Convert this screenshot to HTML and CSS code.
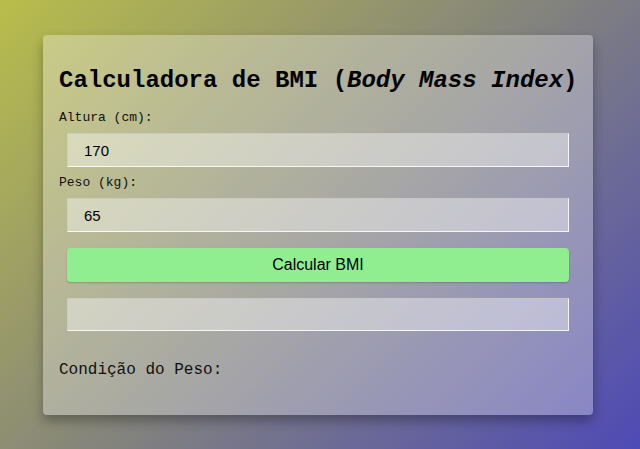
FILE: index.html
```html
<!DOCTYPE html>
<html lang="pt">
<head>
<meta charset="utf-8">
<title>Calculadora de BMI</title>
<link rel="stylesheet" href="styles.css">
</head>
<body>
<div class="card">
  <h1 class="title">Calculadora de BMI (<em>Body Mass Index</em>)</h1>
  <label class="label" for="altura">Altura (cm):</label>
  <input class="field" id="altura" type="text" value="170">
  <label class="label" for="peso">Peso (kg):</label>
  <input class="field" id="peso" type="text" value="65">
  <button class="btn" type="button">Calcular BMI</button>
  <input class="field result" type="text" value="">
  <p class="cond">Condição do Peso:</p>
</div>
</body>
</html>
```
FILE: styles.css
```css
html, body {
  margin: 0;
  height: 100%;
}
body {
  background: linear-gradient(135deg, #b9bd4a 0%, #84847c 50%, #4e4ab6 100%);
  padding: 35px 0 0 43px;
  box-sizing: border-box;
  font-family: "Liberation Mono", "Courier New", monospace;
}
.card {
  width: 550px;
  height: 380px;
  box-sizing: border-box;
  padding: 16px 16px 0 16px;
  background: rgba(255, 255, 255, 0.3);
  border-radius: 4px;
  box-shadow: 0 6px 12px rgba(0, 0, 0, 0.3);
  display: flex;
  flex-direction: column;
  align-items: stretch;
}
.title {
  font-family: "Liberation Mono", "Courier New", monospace;
  font-size: 24px;
  font-weight: bold;
  line-height: 27px;
  margin: 16px 0 16px 0;
  color: #000;
  white-space: nowrap;
}
.title em {
  font-style: italic;
}
.label {
  display: block;
  font-size: 13px;
  line-height: 15px;
  color: #111;
}
.field {
  display: block;
  margin: 8px 8px 8px 8px;
  height: 34px;
  box-sizing: border-box;
  padding: 0 16px;
  font-family: "Liberation Sans", Arial, sans-serif;
  font-size: 15px;
  color: #000;
  background: rgba(255, 255, 255, 0.4);
  border: 1px solid;
  border-color: rgba(200, 200, 190, 0.8) rgba(255, 255, 255, 0.85) rgba(255, 255, 255, 0.85) rgba(200, 200, 190, 0.6);
  outline: none;
}
.btn {
  margin: 8px 8px 0 8px;
  height: 34px;
  border: none;
  border-radius: 4px;
  background: #90ee90;
  font-family: "Liberation Sans", Arial, sans-serif;
  font-size: 16px;
  color: #000;
  box-shadow: 0 1px 2px rgba(0, 0, 0, 0.2);
}
.result {
  margin-top: 16px;
  height: 33px;
}
.cond {
  margin: 22px 0 0 0;
  font-size: 16px;
  line-height: 18px;
  color: #111;
}
```
